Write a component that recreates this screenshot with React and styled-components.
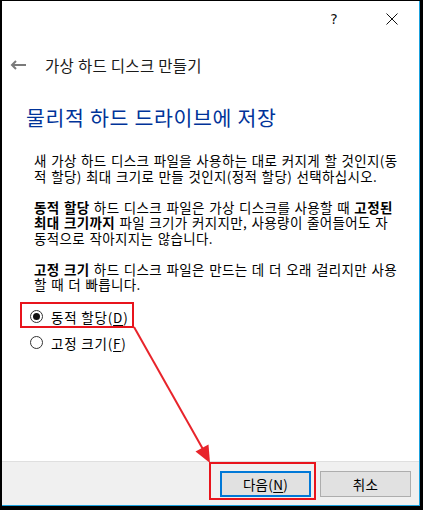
import styled, { createGlobalStyle } from "styled-components";

const GlobalStyle = createGlobalStyle`
  html, body {
    margin: 0;
    padding: 0;
    background: #000;
  }
  body {
    font-family: "Noto Sans CJK KR", "Noto Sans", sans-serif;
    color: #000;
  }
`;

const Frame = styled.div`
  position: relative;
  width: 423px;
  height: 510px;
  box-sizing: border-box;
  padding: 1px 3px 4px 2px;
  background: #000;
`;

const Window = styled.div`
  position: relative;
  display: flex;
  flex-direction: column;
  height: 100%;
  box-sizing: border-box;
  background: #fff;
  border-right: 1px solid #1ba1dd;
  border-bottom: 1px solid #1ba1dd;
`;

const TitleBar = styled.div`
  display: flex;
  justify-content: flex-end;
  align-items: center;
  height: 36px;
  padding-right: 15px;
  gap: 34px;
`;

const TitleButton = styled.div`
  display: flex;
  align-items: center;
  justify-content: center;
  width: 24px;
  height: 24px;
  font-family: "DejaVu Sans", sans-serif;
  font-size: 14px;
  color: #111;
`;

const NavRow = styled.div`
  display: flex;
  align-items: center;
  height: 20px;
  margin-top: 18px;
  padding-left: 8px;
  gap: 18px;
`;

const NavTitle = styled.span`
  font-size: 15.5px;
  color: #1a1a1a;
  letter-spacing: 0.3px;
`;

const Heading = styled.h1`
  margin: 30px 0 0 24px;
  font-size: 20.5px;
  font-weight: 400;
  line-height: 24px;
  color: #003399;
  letter-spacing: 0.7px;
`;

const Content = styled.div`
  display: flex;
  flex-direction: column;
  gap: 15.5px;
  margin-top: 24px;
  padding-left: 32px;
`;

const Para = styled.p`
  margin: 0;
  font-size: 13.5px;
  line-height: 15.5px;
  white-space: nowrap;
  word-spacing: 1px;
  letter-spacing: 0.35px;
`;

const RadioList = styled.div`
  display: flex;
  flex-direction: column;
  margin: 11px 0 0 28px;
`;

const RadioRow = styled.label`
  display: flex;
  align-items: center;
  height: 26px;
  gap: 8px;
  font-size: 13.5px;
  letter-spacing: 0.8px;
`;

const RadioCircle = styled.span`
  display: flex;
  align-items: center;
  justify-content: center;
  width: 13px;
  height: 13px;
  box-sizing: border-box;
  border: 1px solid #333;
  border-radius: 50%;
  background: #fff;

  &::after {
    content: "";
    display: ${(p) => (p.checked ? "block" : "none")};
    width: 7px;
    height: 7px;
    border-radius: 50%;
    background: #111;
  }
`;

const Key = styled.span`
  text-decoration: underline;
  text-underline-offset: 2px;
`;

const Footer = styled.div`
  display: flex;
  justify-content: flex-end;
  gap: 9px;
  margin-top: auto;
  height: 44px;
  padding: 9px 8px 0 0;
  box-sizing: border-box;
  background: #f0f0f0;
  border-top: 1px solid #dfdfdf;
`;

const Button = styled.button`
  width: 91px;
  height: 26px;
  box-sizing: border-box;
  font-family: "Noto Sans CJK KR", sans-serif;
  font-size: 13.5px;
  letter-spacing: 0.3px;
  color: #000;
  background: #e1e1e1;
  border: ${(p) => (p.primary ? "2px solid #0078d7" : "1px solid #adadad")};
  padding: 0;
`;

const Highlight = styled.div`
  position: absolute;
  left: ${(p) => p.x}px;
  top: ${(p) => p.y}px;
  width: ${(p) => p.w}px;
  height: ${(p) => p.h}px;
  box-sizing: border-box;
  border: 2px solid #e8141c;
  pointer-events: none;
`;

const Overlay = styled.svg`
  position: absolute;
  left: 0;
  top: 0;
  pointer-events: none;
`;

const BackArrow = () => (
  <svg width="17" height="10" viewBox="0 0 17 10">
    <path d="M16 5H2M6 1L2 5l4 4" stroke="#7a7a7a" strokeWidth="2" fill="none" />
  </svg>
);

const CloseIcon = () => (
  <svg width="12" height="12" viewBox="0 0 12 12">
    <path d="M0.5 0.5l11 11M11.5 0.5l-11 11" stroke="#111" strokeWidth="1" />
  </svg>
);

const App = () => {
  return (
    <>
      <GlobalStyle />
      <Frame>
        <Window>
          <TitleBar>
            <TitleButton>?</TitleButton>
            <TitleButton>
              <CloseIcon />
            </TitleButton>
          </TitleBar>
          <NavRow>
            <BackArrow />
            <NavTitle>가상 하드 디스크 만들기</NavTitle>
          </NavRow>
          <Heading>물리적 하드 드라이브에 저장</Heading>
          <Content>
            <Para>
              새 가상 하드 디스크 파일을 사용하는 대로 커지게 할 것인지(동
              <br />
              적 할당) 최대 크기로 만들 것인지(정적 할당) 선택하십시오.
            </Para>
            <Para>
              <b>동적 할당</b> 하드 디스크 파일은 가상 디스크를 사용할 때{" "}
              <b>고정된</b>
              <br />
              <b>최대 크기까지</b> 파일 크기가 커지지만, 사용량이 줄어들어도 자
              <br />
              동적으로 작아지지는 않습니다.
            </Para>
            <Para>
              <b>고정 크기</b> 하드 디스크 파일은 만드는 데 더 오래 걸리지만 사용
              <br />
              할 때 더 빠릅니다.
            </Para>
          </Content>
          <RadioList>
            <RadioRow>
              <RadioCircle checked />
              <span>
                동적 할당(<Key>D</Key>)
              </span>
            </RadioRow>
            <RadioRow>
              <RadioCircle />
              <span>
                고정 크기(<Key>F</Key>)
              </span>
            </RadioRow>
          </RadioList>
          <Footer>
            <Button primary>
              다음(<Key>N</Key>)
            </Button>
            <Button>취소</Button>
          </Footer>
          <Highlight x={18} y={301} w={114} h={26} />
          <Highlight x={207} y={461} w={107} h={38} />
        </Window>
        <Overlay width="423" height="510" viewBox="0 0 423 510">
          <line x1="134" y1="327" x2="204" y2="451" stroke="#e8242b" strokeWidth="2" />
          <polygon points="210,463 195.5,451.5 208.5,444.5" fill="#e8242b" />
        </Overlay>
      </Frame>
    </>
  );
};

export default App;
